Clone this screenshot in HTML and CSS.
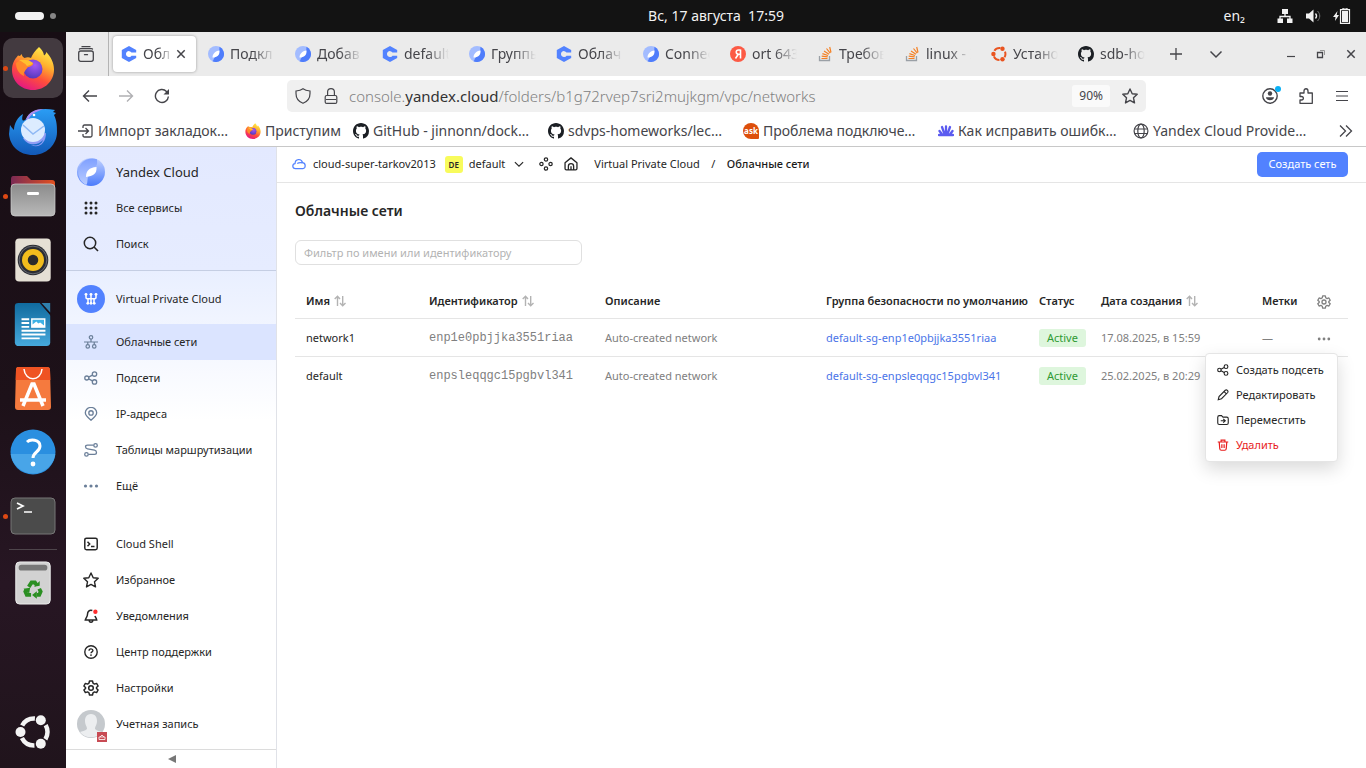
FILE: index.html
```html
<!DOCTYPE html>
<html lang="ru">
<head>
<meta charset="utf-8">
<title>Облачные сети</title>
<link rel="stylesheet" href="styles.css">
</head>
<body>
<svg class="sprite" aria-hidden="true">
  <defs>
    <linearGradient id="ff-flame" x1="0.8" y1="0" x2="0.3" y2="1"><stop offset="0" stop-color="#fff44f"/><stop offset="0.35" stop-color="#ffb02e"/><stop offset="0.65" stop-color="#ff4f3a"/><stop offset="1" stop-color="#e31587"/></linearGradient>
    <radialGradient id="ff-globe" cx="0.6" cy="0.3" r="0.8"><stop offset="0" stop-color="#a558f5"/><stop offset="1" stop-color="#4a35b5"/></radialGradient>
    <linearGradient id="tb-blue" x1="0" y1="0" x2="0" y2="1"><stop offset="0" stop-color="#2a9df4"/><stop offset="1" stop-color="#1259b8"/></linearGradient>
    <linearGradient id="folder-front" x1="0" y1="0" x2="0" y2="1"><stop offset="0" stop-color="#8b8b8b"/><stop offset="1" stop-color="#b9b9b9"/></linearGradient>
    <linearGradient id="folder-back"><stop offset="0" stop-color="#7b2a54"/><stop offset="1" stop-color="#e2501f"/></linearGradient>
    <linearGradient id="doc-blue" x1="0" y1="0" x2="0" y2="1"><stop offset="0" stop-color="#106a9e"/><stop offset="1" stop-color="#46a9dc"/></linearGradient>
    <linearGradient id="yc-left" x1="0" y1="0" x2="0" y2="1"><stop offset="0" stop-color="#7fa0ff"/><stop offset="1" stop-color="#b9ccff"/></linearGradient>
    <linearGradient id="yc-right" x1="0" y1="0" x2="0" y2="1"><stop offset="0" stop-color="#c3d3ff"/><stop offset="1" stop-color="#4b7bfb"/></linearGradient>
  </defs>
  <symbol id="firefox" viewBox="0 0 44 44">
    <path fill="url(#ff-flame)" d="M28 1c3 2.500 4.500 5 5 8.500 1.500-1 2-2 2.300-3.500C40 11 43 17 43 23.500 43 35 34 44 22 44S1 35 1 24c0-6 2-10 6-14.500L9 10l1.500-2c.5 2 1.500 3 3 4C16 11 18 11 20 12c1.500-4 4-7 8-11z"/>
    <circle cx="22" cy="23" r="9.500" fill="url(#ff-globe)"/>
    <path fill="#ff8a2b" d="M5 17c4-4 9-3 12-1l5 1c1 2-3 4-5 4-2 3-5 5-4 9-5-2-8-7-8-13z"/>
    <path fill="#ffc02e" d="M8 14c6-1 11 0 14 3-1 2-4 2-6 3-2-3-5-4-8-6z"/>
  </symbol>
  <symbol id="thunderbird" viewBox="0 0 48 48">
    <path fill="url(#tb-blue)" d="M17 11C21 3 30-1 46 2l-2 2 3 1-2 2c3 6 3 12 3 17C48 37 37 47 24 47 10 47 1 38 0 26l1-9c2 3 3 4 4 5 0-7 4-13 9-16-2 7 0 8 3 5z"/>
    <path fill="#ab8df0" d="M17 11c3-7 9-10 18-10-9 3-14 5-16 12z"/>
    <path d="M14 30c4 8 15 8 20 2-2 6-8 6-12 5 8 4 15-2 15-12" fill="#8f9df5"/>
    <circle cx="24" cy="22" r="12" fill="#dcecff"/>
    <path d="M14 17l10 9 11-8" fill="none" stroke="#8fb9f4" stroke-width="1.500"/>
    <circle cx="25" cy="7" r="1.300" fill="#fff"/>
  </symbol>
  <symbol id="files" viewBox="0 0 46 42">
    <path fill="url(#folder-back)" d="M3 1h14l4 4h21c2 0 3 1 3 3v12H1V4c0-2 1-3 2-3z"/>
    <rect x="1" y="9" width="44" height="32" rx="4" fill="url(#folder-front)" stroke="#d0d0d0" stroke-width=".7"/>
    <rect x="17" y="17" width="12" height="3" rx="1.200" fill="#fff"/>
  </symbol>
  <symbol id="rhythmbox" viewBox="0 0 38 46">
    <rect x=".5" y=".5" width="37" height="45" rx="4" fill="#e5e0d5"/>
    <circle cx="19" cy="23" r="16" fill="#2b2d33"/><circle cx="19" cy="23" r="14.500" fill="none" stroke="#6b6e78" stroke-width="1"/>
    <circle cx="19" cy="23" r="11.500" fill="#f2bd1d"/><circle cx="19" cy="23" r="5.500" fill="#2b2b2b"/>
  </symbol>
  <symbol id="writer" viewBox="0 0 38 46">
    <path fill="url(#doc-blue)" d="M4 1h23l10 12v29c0 2-1 4-4 4H4c-2 0-4-1-4-4V5c0-3 1-4 4-4z"/><path fill="#1c1119" d="M26 1h2l10 11v3z"/><path fill="#2f80ad" d="M28 1h9v10z"/>
    <g fill="#fff"><path d="M7 17h8v2H7zm0 4h8v2H7zm0 4h8v2H7zm0 4h25v2H7zm0 4h25v2H7zm0 4h19v2H7z"/><path d="M17 17h15v10H17z"/></g>
    <path fill="#3fb2e5" d="M18.500 18.500h12v6l-4-3-2 1-2-2-4 3z"/>
  </symbol>
  <symbol id="appcenter" viewBox="0 0 38 44">
    <path fill="#f57a3e" d="M4 1h29c2 0 3 1 3 3l1 37c0 2-1 3-3 3H4c-2 0-3-1-3-3L2 4c0-2 1-3 2-3z"/><path fill="#ef5323" d="M4 1h29c2 0 3 1 3 3l.4 10H1.700L2 4c0-2 1-3 2-3z"/>
    <path d="M10 3c1 13 17 13 18 0" fill="none" stroke="#fff" stroke-width="1.500"/>
    <path d="M9 40l9-22h2l9 22M6 34h26" fill="none" stroke="#fff" stroke-width="3.500"/>
  </symbol>
  <symbol id="help-app" viewBox="0 0 46 46">
    <circle cx="23" cy="23" r="22.500" fill="#2a8fe0"/><path d="M.7 25a22.500 22.500 0 0 0 44.600 0z" fill="#48a5e8"/>
    <path d="M17 13c3-3 13-3 13 4 0 6-7 6-7 12" fill="none" stroke="#fff" stroke-width="3"/><circle cx="23" cy="35" r="2.400" fill="#fff"/>
  </symbol>
  <symbol id="terminal-app" viewBox="0 0 46 38">
    <rect x="1" y="1" width="44" height="36" rx="4" fill="#4b4b4b" stroke="#777" stroke-width="1"/>
    <path d="M7 6l6 3-6 3M14 15h8" fill="none" stroke="#fff" stroke-width="1.700"/>
  </symbol>
  <symbol id="trash-app" viewBox="0 0 38 46">
    <rect x="1" y="1" width="36" height="44" rx="4" fill="#d2d2d2" stroke="#eee"/><rect x="4" y="4" width="30" height="6" rx="3" fill="#777"/>
    <g fill="none" stroke="#2b8f22" stroke-width="4"><path d="M14.500 27l3-4.500h3.500l2 3"/><path d="M25.500 29l1.500 3-1.500 3.500H23"/><path d="M17 35.500h-4.500L11 32l1-2"/></g>
    <path fill="#2b8f22" d="M20 27l6-1v-5zM23 31.500v8l-5-4zM9 29l7-1-1 6z"/>
  </symbol>
  <symbol id="ubuntu" viewBox="0 0 36 36">
    <circle cx="19" cy="18" r="13.500" fill="none" stroke="currentColor" stroke-width="4.500" stroke-dasharray="15.270 13" stroke-dashoffset="7.650"/>
    <g fill="currentColor"><circle cx="5.500" cy="18" r="5"/><circle cx="25.800" cy="6.300" r="5"/><circle cx="25.800" cy="29.700" r="5"/></g>
  </symbol>
  <symbol id="yc-c" viewBox="0 0 16 16">
    <path fill="#5282ff" d="M8 0l7.200 4v2.500h-4.700A3 3 0 1 0 10.500 9.700h4.700V12L8 16 .8 12V4z"/>
  </symbol>
  <symbol id="yc-leaf" viewBox="0 0 16 16">
    <circle cx="8" cy="8" r="8" fill="#a3bcff"/><path fill="#4f7dfb" d="M11.500.8A8 8 0 1 1 4.500 15.200C6 14 5.500 12 7 11l4-3z"/><path fill="#fff" d="M11.500 4.500C12 9 9 11.500 4.500 11.500 4.500 8 7 5 11.500 4.500z"/>
  </symbol>
  <symbol id="yc-logo" viewBox="0 0 28 28">
    <circle cx="14" cy="14" r="14" fill="url(#yc-right)"/><path fill="url(#yc-left)" d="M20 1.300A14 14 0 0 0 9 27c2-1 1-5 2-8l7-10c3-2 2-5 2-7.700z"/><path fill="#fff" d="M19.500 9C20 16 16 18 9 19 9 13 12 9.500 19.500 9z"/>
  </symbol>
  <symbol id="ya" viewBox="0 0 16 16"><circle cx="8" cy="8" r="8" fill="#fc5a45"/><path d="M10.500 3.500v9M10.500 4H8.500C5.500 4 5.500 8.200 8.500 8.200h2M8.300 8.200L5.500 12.500" fill="none" stroke="#fff" stroke-width="1.600"/></symbol>
  <symbol id="so" viewBox="0 0 16 16"><path d="M2.500 10v4.500h10V10" fill="none" stroke="#9aa0a6" stroke-width="1.300"/><path d="M4.500 12.500h6M4.700 10.200l6 .7M5.400 7.600l5.600 1.900M7 5l5 3.300M9.500 2.500l3.700 4.700M12.700 1l1.300 5.500" fill="none" stroke="#f48024" stroke-width="1.200"/></symbol>
  <symbol id="github" viewBox="0 0 16 16"><path fill="#1b1f24" d="M8 0C3.580 0 0 3.580 0 8c0 3.540 2.290 6.530 5.470 7.590.4.070.55-.17.55-.38 0-.19-.01-.82-.01-1.490-2.010.37-2.530-.49-2.690-.94-.09-.23-.48-.94-.82-1.130-.28-.15-.68-.52-.01-.53.63-.01 1.080.58 1.230.82.72 1.210 1.870.87 2.330.66.07-.52.28-.87.51-1.070-1.780-.2-3.640-.89-3.640-3.950 0-.87.31-1.590.82-2.150-.08-.2-.36-1.020.08-2.120 0 0 .67-.21 2.200.82.64-.18 1.320-.27 2-.27s1.360.09 2 .27c1.530-1.040 2.200-.82 2.200-.82.44 1.100.16 1.920.08 2.120.51.56.82 1.270.82 2.150 0 3.070-1.870 3.750-3.650 3.950.29.25.54.73.54 1.480 0 1.070-.01 1.930-.01 2.200 0 .21.15.46.55.38A8.010 8.010 0 0 0 16 8c0-4.420-3.580-8-8-8z"/></symbol>
  <symbol id="wave" viewBox="0 0 16 16"><path d="M1.500 8l3 4M4 4l2.500 7M8 3.500V11M12 4L9.500 11M14.500 8l-3 4M1 12h14" fill="none" stroke="#5b5bf0" stroke-width="2.300" stroke-linecap="round"/></symbol>
  <symbol id="globe" viewBox="0 0 16 16"><g fill="none" stroke="currentColor" stroke-width="1.200"><circle cx="8" cy="8" r="6.900"/><ellipse cx="8" cy="8" rx="3.200" ry="6.900"/><path d="M1 6h14M1 10.500h14"/></g></symbol>
  <symbol id="import" viewBox="0 0 16 16"><path d="M5 5V3.500C5 2.500 5.500 2 6.500 2h6c1 0 1.500.5 1.500 1.500v9c0 1-.5 1.500-1.500 1.500h-6C5.500 14 5 13.500 5 12.500V11M0 8h10M7.500 5L10.500 8l-3 3" fill="none" stroke="currentColor" stroke-width="1.300"/></symbol>
  <symbol id="tabview" viewBox="0 0 16 16"><g fill="none" stroke="currentColor" stroke-width="1.300" stroke-linecap="round"><rect x=".7" y="5" width="14.600" height="10.300" rx="2"/><path d="M1.500 3C2 2.500 2.500 2.700 3.500 2.700h9c1 0 1.500-.2 2 .3M4 .7h8M6.500 8.700h3"/></g></symbol>
  <symbol id="x" viewBox="0 0 16 16"><path d="M4.300 4.300l7.400 7.400M11.700 4.300l-7.400 7.400" fill="none" stroke="currentColor" stroke-width="1.500"/></symbol>
  <symbol id="back" viewBox="0 0 16 16"><path d="M15 8H1.500M7 2.500L1.500 8 7 13.500" fill="none" stroke="currentColor" stroke-width="1.400"/></symbol>
  <symbol id="forward" viewBox="0 0 16 16"><path d="M1 8h13.500M9 2.500L14.500 8 9 13.500" fill="none" stroke="currentColor" stroke-width="1.400"/></symbol>
  <symbol id="reload" viewBox="0 0 16 16"><path d="M14.400 8.500A6.500 6.500 0 1 1 12.500 3.400l1.500 1.500" fill="none" stroke="currentColor" stroke-width="1.400"/><path d="M15 1v5.500H9.500z" fill="currentColor"/></symbol>
  <symbol id="shield" viewBox="0 0 16 16"><path d="M8 .8C10 2.300 12.500 2.800 15 3v2.500c0 5-3.500 8.500-7 9.800C4.500 14 1 10.500 1 5.500V3C3.500 2.800 6 2.300 8 .8z" fill="none" stroke="currentColor" stroke-width="1.200"/></symbol>
  <symbol id="lock" viewBox="0 0 16 16"><g fill="none" stroke="currentColor" stroke-width="1.200"><rect x="2.200" y="7.500" width="11.600" height="7.900" rx="1.500"/><path d="M4.600 7.500V4a3.400 3.400 0 0 1 6.800 0v3.500M3 11.500h10"/></g></symbol>
  <symbol id="star" viewBox="0 0 16 16"><path d="M8 1l2.200 4.700 5 .6-3.700 3.500 1 5.100L8 12.400l-4.500 2.500 1-5.100L.8 6.300l5-.6z" fill="none" stroke="currentColor" stroke-width="1.400" stroke-linejoin="round"/></symbol>
  <symbol id="account" viewBox="0 0 16 16"><circle cx="8" cy="8" r="7.200" fill="none" stroke="currentColor" stroke-width="1.400"/><circle cx="8" cy="5.500" r="2.200" fill="currentColor"/><path fill="currentColor" d="M4 9.200h8c0 4-8 4-8 0z"/></symbol>
  <symbol id="puzzle" viewBox="0 0 16 16"><path d="M2 5h4V3c0-3 4-3 4 0v2h4.300v10.300H2V12h1.500C6 12 6 8.500 3.500 8.500H2z" fill="none" stroke="currentColor" stroke-width="1.300" stroke-linejoin="round"/></symbol>
  <symbol id="menu" viewBox="0 0 16 16"><path d="M2 3.500h12M2 8h12M2 12.500h12" stroke="currentColor" stroke-width="1.200"/></symbol>
  <symbol id="plus" viewBox="0 0 16 16"><path d="M2 8h12M8 2v12" stroke="currentColor" stroke-width="1.300"/></symbol>
  <symbol id="chevron" viewBox="0 0 16 16"><path d="M2.500 5.500L8 11l5.500-5.500" fill="none" stroke="currentColor" stroke-width="1.500"/></symbol>
  <symbol id="more-right" viewBox="0 0 16 16"><path d="M2 2.500L7.500 8 2 13.500M8 2.500L13.500 8 8 13.500" fill="none" stroke="currentColor" stroke-width="1.300"/></symbol>
  <symbol id="minimize" viewBox="0 0 16 16"><path d="M4 10.500h8" stroke="currentColor" stroke-width="1.200"/></symbol>
  <symbol id="restore" viewBox="0 0 16 16"><path d="M4.500 6.500h5v5h-5z" fill="none" stroke="currentColor" stroke-width="1.300"/><path d="M7 4.500h4.500V9" fill="none" stroke="#999"/></symbol>
  <symbol id="network" viewBox="0 0 16 16"><path fill="currentColor" d="M5 1h6v5H5zM.5 10.500h5.500v4.500H.5zM10 10.500h5.500v4.500H10z"/><path d="M8 5v3M3 11V8.500h10V11" fill="none" stroke="currentColor" stroke-width="1.300"/></symbol>
  <symbol id="sound" viewBox="0 0 16 16"><path fill="currentColor" d="M1 5.500h3L8.500 1.500v13L4 10.500H1z"/><path d="M10.500 5.500c1.300 1.500 1.300 3.500 0 5" fill="none" stroke="currentColor" stroke-width="1.300"/><path d="M12.500 3c3 3 3 7 0 10" fill="none" stroke="#777"/></symbol>
  <symbol id="battery" viewBox="0 0 18 16"><path fill="currentColor" d="M4.500 3L0 9h2.500L2 13l4-6H3.700zM9 3h6v11H9z"/><path d="M7.500 1.700h9v13.600h-9zM10 1V0h4v1" fill="none" stroke="currentColor" stroke-width="1.200"/></symbol>
  <symbol id="grid" viewBox="0 0 16 16"><g fill="currentColor"><circle cx="3" cy="3" r="1.500"/><circle cx="8" cy="3" r="1.500"/><circle cx="13" cy="3" r="1.500"/><circle cx="3" cy="8" r="1.500"/><circle cx="8" cy="8" r="1.500"/><circle cx="13" cy="8" r="1.500"/><circle cx="3" cy="13" r="1.500"/><circle cx="8" cy="13" r="1.500"/><circle cx="13" cy="13" r="1.500"/></g></symbol>
  <symbol id="search" viewBox="0 0 16 16"><circle cx="7" cy="7" r="5.700" fill="none" stroke="currentColor" stroke-width="1.500"/><path d="M11 11l4 4" stroke="currentColor" stroke-width="1.600"/></symbol>
  <symbol id="vpc" viewBox="0 0 16 16"><path d="M3 3v3.500c0 .7.400 1.200 1.200 1.200h7.600c.8 0 1.200-.5 1.200-1.200V3M8 3v10M5 7.700V12M11 7.700V12" fill="none" stroke="#fff" stroke-width="1.500"/><g fill="#fff"><circle cx="3" cy="3.300" r="1.400"/><circle cx="8" cy="3.300" r="1.400"/><circle cx="13" cy="3.300" r="1.400"/><circle cx="4.800" cy="12.300" r="1.400"/><circle cx="8" cy="12.300" r="1.400"/><circle cx="11.200" cy="12.300" r="1.400"/></g></symbol>
  <symbol id="nets" viewBox="0 0 16 16"><g fill="none" stroke="currentColor" stroke-width="1.400"><circle cx="8" cy="2.700" r="2"/><circle cx="4.300" cy="13" r="2"/><circle cx="11.700" cy="13" r="2"/><path d="M8 4.700V8M0 8h16M4.300 8v3M11.700 8v3"/></g></symbol>
  <symbol id="share" viewBox="0 0 16 16"><g fill="none" stroke="currentColor" stroke-width="1.500"><circle cx="3.200" cy="8" r="2.300"/><circle cx="12" cy="3.500" r="2.500"/><circle cx="12" cy="12.500" r="2.500"/><path d="M5.300 7l4.300-2.200M5.300 9l4.300 2.200"/></g></symbol>
  <symbol id="pin" viewBox="0 0 16 16"><g fill="none" stroke="currentColor" stroke-width="1.500"><path d="M8 15.200C4 12 1.500 9.500 1.500 6.700a6.500 6.200 0 0 1 13 0C14.500 9.500 12 12 8 15.200z"/><circle cx="8" cy="6.800" r="2.500"/></g></symbol>
  <symbol id="route" viewBox="0 0 16 16"><g fill="none" stroke="currentColor" stroke-width="1.500"><circle cx="13.200" cy="2.800" r="2"/><circle cx="2.800" cy="13" r="2"/><path d="M11 2.500H4c-3 0-3 3.700 0 4.200l8 1.500c3 .7 3 4.800 0 4.800H5"/></g></symbol>
  <symbol id="dots" viewBox="0 0 16 16"><g fill="currentColor"><circle cx="2.500" cy="8" r="1.600"/><circle cx="8" cy="8" r="1.600"/><circle cx="13.500" cy="8" r="1.600"/></g></symbol>
  <symbol id="shell" viewBox="0 0 16 16"><g fill="none" stroke="currentColor" stroke-width="1.700"><rect x=".9" y="1.500" width="14.200" height="13" rx="2"/><path d="M4 5.500L6.500 8 4 10.500M8 10.800h4"/></g></symbol>
  <symbol id="bell" viewBox="0 0 16 16"><path d="M9.500 1.800C6 .8 4 3 4 6c0 3-2 4-2.500 6.500h13c-.3-2-1.500-3-2-4.500M6 12.800c0 3 4 3 4 0" fill="none" stroke="currentColor" stroke-width="1.700"/><circle cx="13" cy="3.200" r="2.500" fill="#ff2d2d"/></symbol>
  <symbol id="question" viewBox="0 0 16 16"><g fill="none" stroke="currentColor" stroke-width="1.600"><circle cx="8" cy="8" r="7.100"/><path d="M5.800 6.500c0-3 4.400-2.500 4.400-.2C10.200 8 8 7.800 8 9.500"/></g><circle cx="8" cy="11.500" r="1" fill="currentColor"/></symbol>
  <symbol id="gear" viewBox="0 0 16 16"><g fill="none" stroke="currentColor" stroke-width="1.500" stroke-linejoin="round"><path d="M6.500 1h3l.5 2.200 1.500.9 2.100-.7 1.500 2.600L13.500 7.500v1l1.600 1.500-1.500 2.600-2.100-.7-1.500.9-.5 2.200h-3L6 12.800l-1.500-.9-2.100.7L.9 10l1.600-1.500v-1L.9 6l1.500-2.600 2.100.7L6 3.200z"/><circle cx="8" cy="8" r="2.300"/></g></symbol>
  <symbol id="cloud" viewBox="0 0 16 16"><path d="M4 13.200C0 13.200 0 7.800 3.500 7.500 3.500 1.500 11 1.500 12 6.500c4 .2 4 6.500.5 6.700zM6 7.500c2-1.500 4.500-1 6-.8" fill="none" stroke="currentColor" stroke-width="1.400"/></symbol>
  <symbol id="diamonds" viewBox="0 0 16 16"><g fill="none" stroke="currentColor" stroke-width="1.400"><circle cx="8" cy="2.800" r="1.900"/><circle cx="2.800" cy="8" r="1.900"/><circle cx="13.200" cy="8" r="1.900"/><circle cx="8" cy="13.200" r="1.900"/></g></symbol>
  <symbol id="home" viewBox="0 0 16 16"><path d="M1.200 13.200V6.500L8 1l6.800 5.500v6.700c0 1-.5 1.500-1.500 1.500H2.700c-1 0-1.500-.5-1.500-1.500zM5 14.500v-4C5 6.500 11 6.500 11 10.500v4M8 10.500v4" fill="none" stroke="currentColor" stroke-width="1.500" stroke-linejoin="round"/></symbol>
  <symbol id="sort" viewBox="0 0 12 12"><path d="M3.500 11V1.500M.7 4l2.800-2.700L6 4M8.700 1v9.500M6 8l2.700 2.700L11.500 8" fill="none" stroke="currentColor" stroke-width="1.400"/></symbol>
  <symbol id="pencil" viewBox="0 0 16 16"><path d="M1.700 14.300l1-4.300L11 1.700c2-1.500 4.500 1 3.300 3L6 13zM9.500 3.500l3 3" fill="none" stroke="currentColor" stroke-width="1.500"/></symbol>
  <symbol id="move" viewBox="0 0 16 16"><path d="M3 2.200h3l2 2h5c1.200 0 2 .8 2 2V12c0 1.200-.8 2-2 2H3c-1.200 0-2-.8-2-2V4.200c0-1.200.8-2 2-2zM5 9h6M8.300 6.500L11 9l-2.700 2.500" fill="none" stroke="currentColor" stroke-width="1.500"/></symbol>
  <symbol id="bin" viewBox="0 0 16 16"><path d="M1 4h14M5.500 4V1.500h5V4M3 4.500l.7 8.500c.1 1.300.8 2 2 2h4.600c1.200 0 1.900-.7 2-2l.7-8.500M6.500 7v5M9.500 7v5" fill="none" stroke="currentColor" stroke-width="1.600"/></symbol>
</svg>

<header class="topbar">
  <div class="workspaces"><span class="ws-current"></span><span class="ws-other"></span></div>
  <time class="clock">Вс, 17 августа&nbsp; 17:59</time>
  <div class="tray">
    <span class="layout">en₂</span>
    <svg class="ico16"><use href="#network"/></svg>
    <svg class="ico16"><use href="#sound"/></svg>
    <svg class="ico18"><use href="#battery"/></svg>
  </div>
</header>

<div class="desktop">
  <nav class="dock" aria-label="Приложения">
    <button class="app active running" aria-label="Firefox"><svg class="a44"><use href="#firefox"/></svg></button>
    <button class="app" aria-label="Thunderbird"><svg class="a48"><use href="#thunderbird"/></svg></button>
    <button class="app running" aria-label="Файлы"><svg class="a46x42"><use href="#files"/></svg></button>
    <button class="app" aria-label="Rhythmbox"><svg class="a38"><use href="#rhythmbox"/></svg></button>
    <button class="app" aria-label="Writer"><svg class="a38"><use href="#writer"/></svg></button>
    <button class="app" aria-label="App Center"><svg class="a38"><use href="#appcenter"/></svg></button>
    <button class="app" aria-label="Справка"><svg class="a46"><use href="#help-app"/></svg></button>
    <button class="app running" aria-label="Терминал"><svg class="a46"><use href="#terminal-app"/></svg></button>
    <hr class="dock-line">
    <button class="app" aria-label="Корзина"><svg class="a38"><use href="#trash-app"/></svg></button>
    <button class="app launcher" aria-label="Показать приложения"><svg class="a36"><use href="#ubuntu"/></svg></button>
  </nav>

  <div class="browser">
    <div class="tabs">
      <button class="tabview" aria-label="Обзор вкладок"><svg class="ico16"><use href="#tabview"/></svg></button>
      <div class="tablist">
        <button class="tab current"><svg class="ico16"><use href="#yc-c"/></svg><span class="tab-title">Обл</span><svg class="ico16 tab-close"><use href="#x"/></svg></button>
        <button class="tab"><svg class="ico16"><use href="#yc-leaf"/></svg><span class="tab-title">Подкл</span></button>
        <button class="tab"><svg class="ico16"><use href="#yc-leaf"/></svg><span class="tab-title">Добав</span></button>
        <button class="tab"><svg class="ico16"><use href="#yc-c"/></svg><span class="tab-title">default</span></button>
        <button class="tab"><svg class="ico16"><use href="#yc-leaf"/></svg><span class="tab-title">Группы</span></button>
        <button class="tab"><svg class="ico16"><use href="#yc-c"/></svg><span class="tab-title">Облач</span></button>
        <button class="tab"><svg class="ico16"><use href="#yc-leaf"/></svg><span class="tab-title">Connec</span></button>
        <button class="tab"><svg class="ico16"><use href="#ya"/></svg><span class="tab-title">ort 643</span></button>
        <button class="tab"><svg class="ico16"><use href="#so"/></svg><span class="tab-title">Требов</span></button>
        <button class="tab"><svg class="ico16"><use href="#so"/></svg><span class="tab-title">linux - I</span></button>
        <button class="tab"><svg class="ico16 orange"><use href="#ubuntu"/></svg><span class="tab-title">Устано</span></button>
        <button class="tab"><svg class="ico16"><use href="#github"/></svg><span class="tab-title">sdb-ho</span></button>
      </div>
      <div class="tab-tools">
        <button aria-label="Новая вкладка"><svg class="ico16"><use href="#plus"/></svg></button>
        <button aria-label="Список вкладок"><svg class="ico16"><use href="#chevron"/></svg></button>
      </div>
      <div class="window-tools">
        <button aria-label="Свернуть"><svg class="ico16"><use href="#minimize"/></svg></button>
        <button aria-label="Восстановить"><svg class="ico16"><use href="#restore"/></svg></button>
        <button aria-label="Закрыть"><svg class="ico16"><use href="#x"/></svg></button>
      </div>
    </div>

    <div class="toolbar">
      <div class="nav-buttons">
        <button aria-label="Назад"><svg class="ico16"><use href="#back"/></svg></button>
        <button class="dim" aria-label="Вперёд"><svg class="ico16"><use href="#forward"/></svg></button>
        <button aria-label="Обновить"><svg class="ico16"><use href="#reload"/></svg></button>
      </div>
      <div class="urlbar">
        <svg class="ico16"><use href="#shield"/></svg>
        <svg class="ico16"><use href="#lock"/></svg>
        <span class="url">console.<b>yandex.cloud</b>/folders/b1g72rvep7sri2mujkgm/vpc/networks</span>
        <button class="zoom">90%</button>
        <button aria-label="В закладки"><svg class="ico16"><use href="#star"/></svg></button>
      </div>
      <div class="right-buttons">
        <button class="account" aria-label="Аккаунт"><svg class="ico16"><use href="#account"/></svg></button>
        <button aria-label="Расширения"><svg class="ico16"><use href="#puzzle"/></svg></button>
        <button aria-label="Меню"><svg class="ico16"><use href="#menu"/></svg></button>
      </div>
    </div>

    <div class="bookmarks">
      <a class="bm bm-import" href="#"><svg class="ico16"><use href="#import"/></svg>Импорт закладок…</a>
      <a class="bm bm-short" href="#"><svg class="ico16"><use href="#firefox"/></svg>Приступим</a>
      <a class="bm" href="#"><svg class="ico16"><use href="#github"/></svg>GitHub - jinnonn/dock…</a>
      <a class="bm" href="#"><svg class="ico16"><use href="#github"/></svg>sdvps-homeworks/lec…</a>
      <a class="bm" href="#"><span class="ask">ask</span>Проблема подключе…</a>
      <a class="bm" href="#"><svg class="ico16"><use href="#wave"/></svg>Как исправить ошибк…</a>
      <a class="bm" href="#"><svg class="ico16"><use href="#globe"/></svg>Yandex Cloud Provide…</a>
      <button class="bm-more" aria-label="Ещё закладки"><svg class="ico16"><use href="#more-right"/></svg></button>
    </div>

    <div class="console">
      <aside class="sidebar">
        <div class="side-top">
          <a class="side-item brand" href="#"><svg class="ico28"><use href="#yc-logo"/></svg>Yandex Cloud</a>
          <a class="side-item" href="#"><svg class="ico16"><use href="#grid"/></svg>Все сервисы</a>
          <a class="side-item" href="#"><svg class="ico16"><use href="#search"/></svg>Поиск</a>
        </div>
        <div class="side-main">
          <a class="side-item service" href="#"><span class="service-badge"><svg class="ico16"><use href="#vpc"/></svg></span>Virtual Private Cloud</a>
          <a class="side-item gray selected" href="#"><svg class="ico14"><use href="#nets"/></svg>Облачные сети</a>
          <a class="side-item gray" href="#"><svg class="ico14"><use href="#share"/></svg>Подсети</a>
          <a class="side-item gray" href="#"><svg class="ico14"><use href="#pin"/></svg>IP-адреса</a>
          <a class="side-item gray" href="#"><svg class="ico14"><use href="#route"/></svg>Таблицы маршрутизации</a>
          <a class="side-item gray" href="#"><svg class="ico16"><use href="#dots"/></svg>Ещё</a>
        </div>
        <div class="side-bottom">
          <a class="side-item" href="#"><svg class="ico14"><use href="#shell"/></svg>Cloud Shell</a>
          <a class="side-item" href="#"><svg class="ico16"><use href="#star"/></svg>Избранное</a>
          <a class="side-item" href="#"><svg class="ico14"><use href="#bell"/></svg>Уведомления</a>
          <a class="side-item" href="#"><svg class="ico14"><use href="#question"/></svg>Центр поддержки</a>
          <a class="side-item" href="#"><svg class="ico16"><use href="#gear"/></svg>Настройки</a>
          <a class="side-item" href="#"><span class="avatar"><svg class="ico28" viewBox="0 0 28 28"><circle cx="14" cy="14" r="14" fill="#c5c9cd"/><path fill="#eceef0" d="M14 4c5 0 6 4 6 7 0 4-2 5-2 8 2 2 5 2 7 3-5 7-17 7-22 0 2-1 5-1 7-3 0-3-2-4-2-8 0-3 1-7 6-7z"/></svg><svg class="avatar-mark" viewBox="0 0 10 10"><path fill="#c84b54" d="M0 0h10v10H0z"/><path d="M2 5h6v2.500H2zM3 5l2-2 2 2" fill="none" stroke="#fff" stroke-width=".8"/></svg></span>Учетная запись</a>
        </div>
        <button class="collapse" aria-label="Свернуть меню"><svg viewBox="0 0 8 8"><path d="M8 0v8L0 4z" fill="#777"/></svg></button>
      </aside>

      <main class="main">
        <div class="crumbs">
          <a class="cloud-link" href="#"><svg class="ico14"><use href="#cloud"/></svg>cloud-super-tarkov2013</a>
          <a class="folder-link" href="#"><span class="de">DE</span>default</a>
          <button class="chev" aria-label="Выбрать каталог"><svg class="ico12"><use href="#chevron"/></svg></button>
          <button class="quick" aria-label="Дашборд"><svg class="ico14"><use href="#diamonds"/></svg></button>
          <button class="quick" aria-label="Главная"><svg class="ico14"><use href="#home"/></svg></button>
          <nav class="path"><a href="#">Virtual Private Cloud</a><span class="slash">/</span><b>Облачные сети</b></nav>
          <button class="create">Создать сеть</button>
        </div>
        <section class="content">
          <h1>Облачные сети</h1>
          <input class="filter" type="text" aria-label="Фильтр" placeholder="Фильтр по имени или идентификатору">
          <table>
            <colgroup><col class="c-name"><col class="c-id"><col><col class="c-group"><col class="c-status"><col class="c-date"><col class="c-tags"><col class="c-act"></colgroup>
            <thead>
              <tr><th>Имя<svg class="sort"><use href="#sort"/></svg></th><th>Идентификатор<svg class="sort"><use href="#sort"/></svg></th><th>Описание</th><th>Группа безопасности по умолчанию</th><th>Статус</th><th>Дата создания<svg class="sort"><use href="#sort"/></svg></th><th>Метки</th><th class="act"><button aria-label="Настройка таблицы"><svg class="ico14"><use href="#gear"/></svg></button></th></tr>
            </thead>
            <tbody>
              <tr><td class="strong">network1</td><td class="mono">enp1e0pbjjka3551riaa</td><td>Auto-created network</td><td><a href="#">default-sg-enp1e0pbjjka3551riaa</a></td><td><span class="status">Active</span></td><td>17.08.2025, в 15:59</td><td>—</td>
                <td class="act"><button aria-label="Действия"><svg class="ico14"><use href="#dots"/></svg></button>
                  <div class="menu" role="menu">
                    <button role="menuitem"><svg class="ico12"><use href="#share"/></svg>Создать подсеть</button>
                    <button role="menuitem"><svg class="ico12"><use href="#pencil"/></svg>Редактировать</button>
                    <button role="menuitem"><svg class="ico12"><use href="#move"/></svg>Переместить</button>
                    <button role="menuitem" class="danger"><svg class="ico12"><use href="#bin"/></svg>Удалить</button>
                  </div>
                </td></tr>
              <tr><td class="strong">default</td><td class="mono">enpsleqqgc15pgbvl341</td><td>Auto-created network</td><td><a href="#">default-sg-enpsleqqgc15pgbvl341</a></td><td><span class="status">Active</span></td><td>25.02.2025, в 20:29</td><td></td><td></td></tr>
            </tbody>
          </table>
        </section>
      </main>
    </div>
  </div>
</div>
</body>
</html>
```
FILE: styles.css
```css
* { box-sizing: border-box; }
body {
  margin: 0;
  min-height: 100vh;
  display: flex;
  flex-direction: column;
  background: #fff;
  color: #262626;
  font: 14px/20px "Noto Sans", "Open Sans", sans-serif;
}
button { border: 0; padding: 0; margin: 0; background: none; color: inherit; font: inherit; }
a { color: inherit; text-decoration: none; }
svg { display: block; flex: none; }
.sprite { position: absolute; width: 0; height: 0; }
.ico12 { width: 12px; height: 12px; }
.ico14 { width: 14px; height: 14px; }
.ico16 { width: 16px; height: 16px; }
.ico18 { width: 18px; height: 16px; }
.ico28 { width: 28px; height: 28px; }

/* system bar */
.topbar {
  display: grid;
  grid-template-columns: 1fr auto 1fr;
  align-items: center;
  height: 32px;
  padding: 0 15px;
  background: #131313;
  color: #f2f2f2;
}
.workspaces { display: flex; align-items: center; gap: 6px; }
.ws-current { width: 29px; height: 8px; border-radius: 4px; background: #f2f2f2; }
.ws-other { width: 6px; height: 6px; border-radius: 50%; background: #868686; }
.clock { padding-left: 66px; }
.tray { display: flex; align-items: center; justify-content: flex-end; gap: 12px; }
.layout { margin-right: 20px; }

.desktop { flex: 1; display: flex; min-height: 0; }

/* dock */
.dock {
  width: 66px;
  flex: none;
  display: flex;
  flex-direction: column;
  align-items: center;
  gap: 4px;
  padding: 6px 0;
  background: linear-gradient(#170d14, #1d1119 50%, #271623 75%, #20141c);
}
.app { position: relative; width: 60px; height: 60px; display: grid; place-items: center; border-radius: 10px; }
.app.active { background: #433a40; }
.app.running::before { content: ""; position: absolute; left: 0; top: 28px; width: 5px; height: 5px; border-radius: 50%; background: #dd4814; }
.app.launcher { margin-top: auto; color: #f4f4f4; }
.dock-line { width: 48px; height: 1px; margin: -1px 0; border: 0; background: #4e454b; }
.a36 { width: 36px; height: 36px; }
.a38 { width: 38px; height: 44px; }
.a44 { width: 44px; height: 44px; }
.a46 { width: 46px; height: 46px; }
.a46x42 { width: 46px; height: 42px; }
.a48 { width: 48px; height: 48px; }

/* browser */
.browser { flex: 1; min-width: 0; display: flex; flex-direction: column; color: #45454a; }
.tabs { display: flex; height: 44px; background: #ebebeb; }
.tabview { width: 43px; display: grid; place-items: center; border-right: 1px solid #b4b4b4; padding-right: 2px; }
.tablist { display: flex; align-items: center; gap: 4px; padding-left: 4px; }
.tab { width: 83px; height: 36px; display: flex; align-items: center; gap: 6px; padding: 0 8px; border-radius: 4px; text-align: left; }
.tab.current { background: #fff; padding-right: 0; box-shadow: 0 0 3px #00000059; }
.tab-title { flex: 1; min-width: 0; overflow: hidden; white-space: nowrap; -webkit-mask-image: linear-gradient(90deg, #000 50%, transparent); mask-image: linear-gradient(90deg, #000 50%, transparent); }
.tab.current .tab-title { flex: none; width: 30px; }
.tab.current .tab-close { margin-left: -6px; }
.orange { color: #e95420; }
.tab-tools { display: flex; align-items: center; gap: 24px; padding-left: 15px; }
.window-tools { display: flex; align-items: center; gap: 14px; margin-left: auto; padding-right: 7px; }
.toolbar { display: flex; align-items: center; height: 40px; background: #fff; }
.nav-buttons { display: flex; gap: 20px; width: 221px; padding-left: 16px; }
.dim { color: #b0b0b3; }
.urlbar { flex: 1; min-width: 0; display: flex; align-items: center; gap: 12px; height: 32px; padding: 0 8px; border-radius: 5px; background: #f0f0f0; }
.url { flex: 1; min-width: 0; overflow: hidden; white-space: nowrap; color: #808080; font-size: 15px; font-weight: 300; margin-left: -2px; }
.url b { font-weight: 400; color: #333; }
.zoom { height: 22px; padding: 0 7px; border-radius: 3px; background: #fafafa; font-size: 12px; }
.right-buttons { display: flex; gap: 20px; width: 220px; justify-content: flex-end; padding-right: 16px; }
.account { position: relative; }
.account::after { content: ""; position: absolute; right: -3px; top: -2px; width: 6px; height: 6px; border-radius: 50%; background: #0ab0f5; }
.bookmarks { display: flex; align-items: center; height: 31px; padding-left: 12px; border-bottom: 1px solid #c8c8c8; background: #fff; }
.bm { display: flex; align-items: center; gap: 4px; width: 195px; white-space: nowrap; }
.bm-import { width: 167px; }
.bm-short { width: 108px; }
.ask { width: 16px; height: 16px; border-radius: 8px 8px 1px 8px; background: #dd4f0b; color: #fff; font-size: 8px; line-height: 15px; font-weight: 700; text-align: center; }
.bm-more { margin-left: auto; padding-right: 12px; }

/* console */
.console { flex: 1; display: flex; color: #262626; font-size: 11px; line-height: 16px; }
.sidebar { width: 211px; flex: none; display: flex; flex-direction: column; border-right: 1px solid #e0e2e8; }
.side-top { height: 124px; padding-top: 7px; border-bottom: 1px solid #c5cee3; background: linear-gradient(#e3e9ff, #e6ecff); }
.side-item { display: grid; grid-template-columns: 50px 1fr; align-items: center; height: 36px; white-space: nowrap; }
.side-item > :first-child { justify-self: center; }
.brand { font-size: 13px; }
.side-main { padding-top: 10px; background: linear-gradient(#e9efff, #fff 150px); }
.service { margin-bottom: 7px; }
.service-badge { width: 28px; height: 28px; display: grid; place-items: center; border-radius: 50%; background: #5282ff; }
.selected { background: #dbe4ff; }
.gray svg { color: #6b7f99; }
.side-bottom { margin-top: auto; padding-bottom: 7px; }
.avatar { position: relative; }
.avatar-mark { position: absolute; right: -2px; bottom: -4px; width: 10px; height: 10px; }
.collapse { height: 19px; flex: none; display: grid; place-items: center; padding-left: 2px; border-top: 1px solid #dcdcdc; }
.collapse svg { width: 8px; height: 8px; }

.main { flex: 1; min-width: 0; }
.crumbs { display: flex; align-items: center; height: 36px; padding: 0 18px 1px 15px; border-bottom: 1px solid #e5e5e5; white-space: nowrap; }
.cloud-link, .folder-link { display: flex; align-items: center; gap: 7px; }
.cloud-link svg { color: #5282ff; }
.folder-link { margin-left: 9px; gap: 6px; }
.de { width: 18px; height: 17px; border-radius: 3px; background: #f8fb5c; font-size: 8px; line-height: 17px; font-weight: 600; text-align: center; }
.chev { margin: 0 8px 0 8px; }
.quick { margin-left: 6px; padding-right: 5px; }
.path { display: flex; margin-left: 11px; }
.path b { font-weight: 500; color: #1a1a1a; }
.slash { width: 27px; text-align: center; }
.create { margin-left: auto; height: 25px; padding: 0 11px; min-width: 91px; border-radius: 5px; background: #5282ff; color: #fff; }
.content { padding: 17px 18px 0; }
h1 { margin: 0 0 18px; font-size: 14px; line-height: 22px; font-weight: 600; }
.filter { display: block; width: 287px; height: 25px; padding: 0 8px; border: 1px solid #e0e0e0; border-radius: 6px; font: inherit; outline: 0; }
.filter::placeholder { color: #b3b3b3; opacity: 1; }
table { width: 100%; margin-top: 18px; border-collapse: separate; border-spacing: 0; table-layout: fixed; }
.c-name { width: 123px; }
.c-id { width: 176px; }
.c-group { width: 213px; }
.c-status { width: 62px; }
.c-date { width: 161px; }
.c-tags { width: 49px; }
.c-act { width: 48px; }
th, td { height: 38px; padding: 0 0 0 11px; text-align: left; white-space: nowrap; border-bottom: 1px solid #e5e5e5; color: #808080; }
th { height: 36px; font-weight: 600; color: #262626; }
tbody tr:last-child td { border-bottom: 0; }
.sort { display: inline-block; width: 12px; height: 12px; margin-left: 4px; vertical-align: -2px; color: #b3b3b3; }
td.strong { color: #262626; }
.mono { font-family: "Liberation Mono", monospace; font-size: 12px; }
td a { color: #4a74e8; }
.status { display: inline-block; height: 18px; padding: 0 8px; border-radius: 3px; background: #def6dd; color: #2f9a33; line-height: 18px; }
th.act, td.act { position: relative; padding: 0; text-align: center; color: #808080; }
.act > button { vertical-align: middle; }
.menu { position: absolute; z-index: 1; top: 34px; right: 10px; width: 133px; padding: 3px 0 4px; border: 1px solid #e5e5e5; border-radius: 4px; background: #fff; box-shadow: 0 7px 18px #00000026; }
.menu button { display: flex; align-items: center; gap: 7px; width: 100%; height: 25px; padding-left: 11px; color: #262626; }
.menu button.danger { color: #e81c1c; }
```
